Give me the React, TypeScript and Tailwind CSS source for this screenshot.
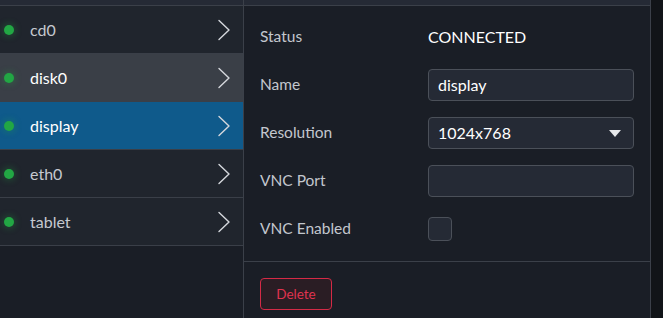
const devices = ['cd0', 'disk0', 'display', 'eth0', 'tablet'];

function Chevron() {
  return (
    <svg width="14" height="22" viewBox="0 0 14 22" fill="none" className="text-[#d5d8dd]">
      <path d="M2 1.5 L12 11 L2 20.5" stroke="currentColor" strokeWidth="1.4" strokeLinecap="round" strokeLinejoin="round" />
    </svg>
  );
}

function DeviceRow({ name, state }: { name: string; state: 'normal' | 'hover' | 'active' }) {
  const bg =
    state === 'active' ? 'bg-[#0f5a8b] text-white' : state === 'hover' ? 'bg-[#3a3f47] text-white' : 'bg-[#20252d] text-[#c5c9d0]';
  return (
    <div className={`flex h-[48px] items-center border-b border-[#3a3f48] pl-[4px] pr-[12px] ${bg}`}>
      <span className="h-[10px] w-[10px] rounded-full bg-[#22a744] shadow-[0_0_6px_2px_rgba(34,167,68,0.25)]" />
      <span className="ml-[16px] flex-1 text-[16px]">{name}</span>
      <Chevron />
    </div>
  );
}

function Field({ label, children }: { label: string; children: React.ReactNode }) {
  return (
    <div className="flex h-[32px] items-center">
      <span className="w-[168px] text-[15.5px] text-[#c3c7ce]">{label}</span>
      <div className="flex flex-1 items-center">{children}</div>
    </div>
  );
}

export default function App() {
  return (
    <div className="flex h-[318px] w-[663px] overflow-hidden bg-[#111418] font-['Lato',sans-serif]">
      <div className="flex w-[651px] flex-col border-r border-[#3b4049] bg-[#1a1e26]">
        <div className="flex h-[6px] border-b border-[#3b4049] bg-[#252a35]">
          <div className="w-[244px] border-r border-[#3b4049]" />
        </div>
        <div className="flex flex-1">
          <div className="w-[244px] border-r border-[#3b4049]">
            {devices.map((d) => (
              <DeviceRow
                key={d}
                name={d}
                state={d === 'display' ? 'active' : d === 'disk0' ? 'hover' : 'normal'}
              />
            ))}
          </div>
          <div className="flex flex-1 flex-col">
            <div className="flex flex-col gap-[16px] border-b border-[#3b4049] px-[16px] pb-[16px] pt-[15px]">
              <Field label="Status">
                <span className="text-[16px] text-white">CONNECTED</span>
              </Field>
              <Field label="Name">
                <div className="flex h-[32px] w-[206px] items-center rounded-[4px] border border-[#4b5059] bg-[#252a35] px-[9px] text-[16px] text-white">
                  display
                </div>
              </Field>
              <Field label="Resolution">
                <div className="flex h-[32px] w-[206px] items-center justify-between rounded-[4px] border border-[#4b5059] bg-[#252a35] pl-[9px] pr-[12px] text-[16px] text-white">
                  1024x768
                  <svg width="12" height="7" viewBox="0 0 12 7">
                    <path d="M0 0 L12 0 L6 7 Z" fill="#e6e8eb" />
                  </svg>
                </div>
              </Field>
              <Field label="VNC Port">
                <div className="h-[32px] w-[206px] rounded-[4px] border border-[#4b5059] bg-[#252a35]" />
              </Field>
              <Field label="VNC Enabled">
                <div className="h-[24px] w-[24px] rounded-[4px] border border-[#4b5059] bg-[#252a35]" />
              </Field>
            </div>
            <div className="px-[16px] pt-[16px]">
              <button className="h-[32px] w-[72px] rounded-[4px] border border-[#d42a46] bg-[#2a1d24] text-[13.5px] text-[#e0334f]">
                Delete
              </button>
            </div>
          </div>
        </div>
      </div>
    </div>
  );
}
